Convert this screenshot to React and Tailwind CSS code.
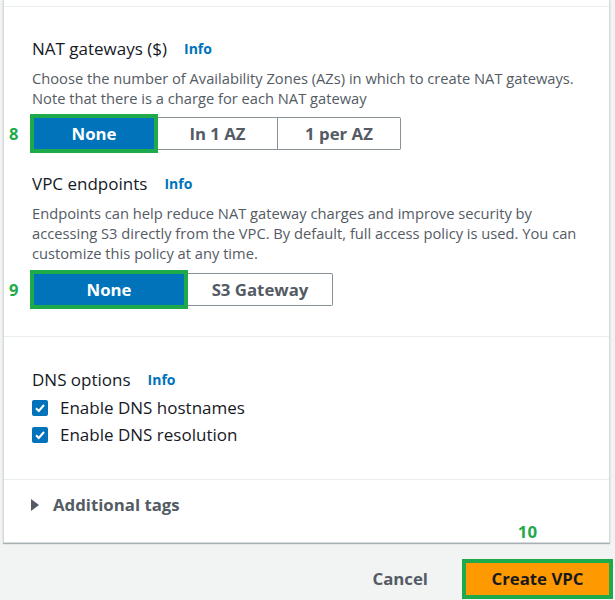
import React from "react";

const font = { fontFamily: "'Open Sans', 'Liberation Sans', sans-serif" };

const Info = () => (
  <span className="ml-[17px] text-[14px] font-bold text-[#0073bb]">Info</span>
);

const Tag = ({ n }) => (
  <span className="absolute -left-[21px] top-1/2 -translate-y-1/2 text-[16.5px] font-bold text-[#1eaa4b]">
    {n}
  </span>
);

const Segmented = ({ label, options }) => (
  <div className="relative flex items-center">
    <Tag n={label} />
    <div className="flex h-[39px] w-[128px] items-center justify-center border-4 border-[#1eaa4b] bg-[#0073bb] text-[16.8px] font-bold text-white">
      None
    </div>
    {options.map((o, i) => (
      <div
        key={o.text}
        className={`flex h-[33px] items-center justify-center border border-l-0 border-[#879196] text-[16.8px] font-bold text-[#545b64] ${
          i === options.length - 1 ? "rounded-r-[2px]" : ""
        }`}
        style={{ width: o.w }}
      >
        {o.text}
      </div>
    ))}
  </div>
);

const Check = ({ children }) => (
  <div className="flex h-[27px] items-center">
    <span className="flex h-[16px] w-[16px] items-center justify-center rounded-[2px] bg-[#0073bb]">
      <svg width="12" height="12" viewBox="0 0 12 12">
        <path d="M2 6.2 L4.8 9 L10 3" fill="none" stroke="white" strokeWidth="2" />
      </svg>
    </span>
    <span className="ml-[12px] text-[17px] text-[#16191f]">{children}</span>
  </div>
);

export default function App() {
  return (
    <div className="min-h-[600px] w-[615px] bg-[#f2f3f3]" style={font}>
      <div className="ml-[3px] w-[607px] border-x border-b border-[#d5dbdb] bg-white shadow-[0_1px_1px_0_rgba(0,28,36,0.3)]">
        <div className="h-[6px]" />

        <div className="border-t border-[#eaeded] pl-[28px] pr-[10px] pt-[31px] pb-[27px]">
          <div className="flex items-center leading-[22px]">
            <span className="text-[17px] text-[#16191f]">NAT gateways ($)</span>
            <Info />
          </div>
          <p className="mt-[8px] whitespace-nowrap text-[14.7px] leading-[20px] text-[#545b64]">
            Choose the number of Availability Zones (AZs) in which to create NAT gateways.
            <br />
            Note that there is a charge for each NAT gateway
          </p>
          <div className="mt-[6px] -ml-[2px]">
            <Segmented
              label="8"
              options={[
                { text: "In 1 AZ", w: 120 },
                { text: "1 per AZ", w: 123 },
              ]}
            />
          </div>

          <div className="mt-[20px] flex items-center leading-[22px]">
            <span className="text-[17px] text-[#16191f]">VPC endpoints</span>
            <Info />
          </div>
          <p className="mt-[8px] whitespace-nowrap text-[14.7px] leading-[20px] text-[#545b64]">
            Endpoints can help reduce NAT gateway charges and improve security by
            <br />
            accessing S3 directly from the VPC. By default, full access policy is used. You can
            <br />
            customize this policy at any time.
          </p>
          <div className="mt-[7px] -ml-[2px]">
            <div className="relative flex items-center">
              <Tag n="9" />
              <div className="flex h-[39px] w-[158px] items-center justify-center border-4 border-[#1eaa4b] bg-[#0073bb] text-[16.8px] font-bold text-white">
                None
              </div>
              <div className="flex h-[33px] w-[145px] items-center justify-center rounded-r-[2px] border border-l-0 border-[#879196] text-[16.8px] font-bold text-[#545b64]">
                S3 Gateway
              </div>
            </div>
          </div>
        </div>

        <div className="border-t border-[#eaeded] pl-[28px] pt-[32px] pb-[31px]">
          <div className="flex items-center leading-[22px]">
            <span className="text-[17px] text-[#16191f]">DNS options</span>
            <Info />
          </div>
          <div className="mt-[3px]">
            <Check>Enable DNS hostnames</Check>
            <Check>Enable DNS resolution</Check>
          </div>
        </div>

        <div className="border-t border-[#eaeded] pl-[27px] pt-[14px]">
          <div className="flex items-center leading-[22px]">
            <svg width="8" height="12" viewBox="0 0 8 12">
              <path d="M0 0 L8 6 L0 12 Z" fill="#545b64" />
            </svg>
            <span className="ml-[14px] text-[16.8px] font-bold text-[#545b64]">Additional tags</span>
          </div>
          <div className="mt-[6px] flex justify-end pr-[72px] leading-[20px]">
            <span className="text-[16.8px] font-bold text-[#1eaa4b]">10</span>
          </div>
        </div>
      </div>

      <div className="mt-[16px] flex items-center justify-end pr-[2px]">
        <span className="text-[16.8px] font-bold text-[#545b64]">Cancel</span>
        <div className="ml-[34px] flex h-[40px] w-[151px] items-center justify-center border-4 border-[#1eaa4b] bg-[#ff9900] text-[16.8px] font-bold text-[#16191f]">
          Create VPC
        </div>
      </div>
    </div>
  );
}
